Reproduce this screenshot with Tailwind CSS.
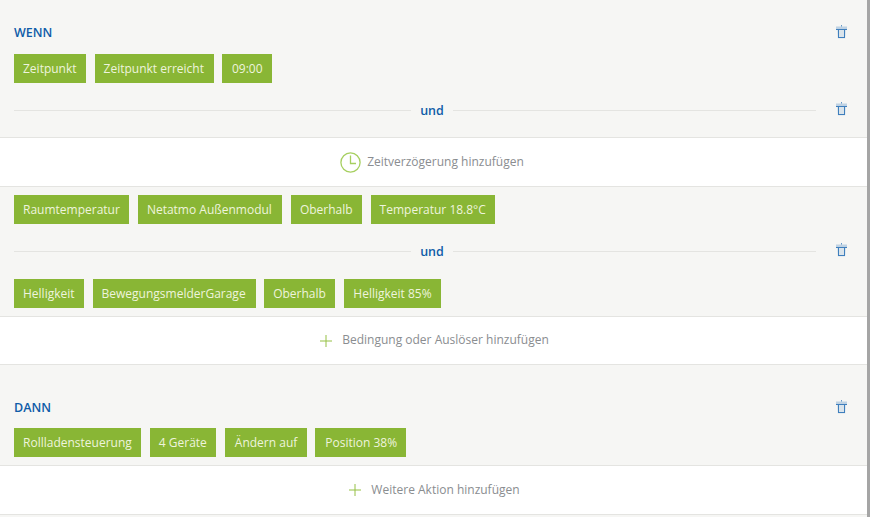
<!DOCTYPE html>
<html lang="de">
<head>
<meta charset="utf-8">
<script src="https://cdn.jsdelivr.net/npm/@tailwindcss/browser@4"></script>
</head>
<body class="bg-[#f6f6f4] overflow-hidden font-['Open_Sans',sans-serif]">
<div class="w-[870px] h-[517px] flex overflow-hidden">
  <main class="w-[867px] shrink-0 flex flex-col">
    <section class="h-[137px] px-[14px] pt-[23px] flex flex-col">
      <div class="h-[18px] flex items-center justify-between pr-[5px]">
        <h2 class="text-[12.5px] pt-[2px] font-semibold text-[#0f5ca8]">WENN</h2>
        <svg class="w-[13px] h-[14px] text-[#3f7fbd]" viewBox="0 0 13 14" fill="none" stroke="currentColor"><path d="M6.5 0v1.5" stroke-opacity=".8"/><path d="M1 1.5h11v3H1z" fill="currentColor" fill-opacity=".3" stroke="none"/><path d="M1 4.5h11"/><path d="M1.8 5l1 8.5h7.4l1-8.5z" fill="currentColor" fill-opacity=".15" stroke="none"/><path d="M3.5 5v8M9.5 5v8M3.5 12.5h6"/></svg>
      </div>
      <div class="flex mt-[13px]">
        <span class="h-[29px] px-[9px] mr-[9px] flex items-center bg-[#89b635] text-[12px] text-[#eef4dd]">Zeitpunkt</span>
        <span class="h-[29px] pl-[9px] pr-[10px] mr-[8px] flex items-center bg-[#89b635] text-[12px] text-[#eef4dd]">Zeitpunkt erreicht</span>
        <span class="h-[29px] pl-[10px] pr-[9px] flex items-center bg-[#89b635] text-[12px] text-[#eef4dd]">09:00</span>
      </div>
      <div class="flex items-center mt-[16px] h-[22px]">
        <div class="flex-1 h-px bg-[#e4e4e1]"></div>
        <span class="w-[42px] pt-[2px] text-center text-[12.5px] font-semibold text-[#0f5ca8]">und</span>
        <div class="w-[363px] h-px bg-[#e4e4e1]"></div>
        <svg class="w-[13px] h-[14px] ml-[19px] mr-[5px] -mt-[2px] text-[#3f7fbd]" viewBox="0 0 13 14" fill="none" stroke="currentColor"><path d="M6.5 0v1.5" stroke-opacity=".8"/><path d="M1 1.5h11v3H1z" fill="currentColor" fill-opacity=".3" stroke="none"/><path d="M1 4.5h11"/><path d="M1.8 5l1 8.5h7.4l1-8.5z" fill="currentColor" fill-opacity=".15" stroke="none"/><path d="M3.5 5v8M9.5 5v8M3.5 12.5h6"/></svg>
      </div>
    </section>
    <div class="h-[50px] bg-white border-y border-[#e4e4e1] flex items-center justify-center gap-[6px] text-[12px] text-[#8a8d90] pr-[3px]">
      <svg class="w-[21px] h-[21px] text-[#a6cf5f]" viewBox="0 0 21 21" fill="none" stroke="currentColor" stroke-width="1.3"><circle cx="10.5" cy="10.5" r="9.6"/><path d="M10.5 3.5v8h5.5"/></svg>
      <span>Zeitverzögerung hinzufügen</span>
    </div>
    <section class="h-[129px] px-[14px] pt-[8px] flex flex-col">
      <div class="flex">
        <span class="h-[29px] px-[9px] mr-[9px] flex items-center bg-[#89b635] text-[12px] text-[#eef4dd]">Raumtemperatur</span>
        <span class="h-[29px] pl-[9px] pr-[10px] mr-[9px] flex items-center bg-[#89b635] text-[12px] text-[#eef4dd]">Netatmo Außenmodul</span>
        <span class="h-[29px] px-[9px] mr-[9px] flex items-center bg-[#89b635] text-[12px] text-[#eef4dd]">Oberhalb</span>
        <span class="h-[29px] px-[9px] flex items-center bg-[#89b635] text-[12px] text-[#eef4dd]">Temperatur 18.8°C</span>
      </div>
      <div class="flex items-center mt-[16px] h-[22px]">
        <div class="flex-1 h-px bg-[#e4e4e1]"></div>
        <span class="w-[42px] pt-[2px] text-center text-[12.5px] font-semibold text-[#0f5ca8]">und</span>
        <div class="w-[363px] h-px bg-[#e4e4e1]"></div>
        <svg class="w-[13px] h-[14px] ml-[19px] mr-[5px] -mt-[2px] text-[#3f7fbd]" viewBox="0 0 13 14" fill="none" stroke="currentColor"><path d="M6.5 0v1.5" stroke-opacity=".8"/><path d="M1 1.5h11v3H1z" fill="currentColor" fill-opacity=".3" stroke="none"/><path d="M1 4.5h11"/><path d="M1.8 5l1 8.5h7.4l1-8.5z" fill="currentColor" fill-opacity=".15" stroke="none"/><path d="M3.5 5v8M9.5 5v8M3.5 12.5h6"/></svg>
      </div>
      <div class="flex mt-[17px]">
        <span class="h-[29px] px-[9px] mr-[9px] flex items-center bg-[#89b635] text-[12px] text-[#eef4dd]">Helligkeit</span>
        <span class="h-[29px] pl-[9px] pr-[10px] mr-[8px] flex items-center bg-[#89b635] text-[12px] text-[#eef4dd]">BewegungsmelderGarage</span>
        <span class="h-[29px] pl-[9.5px] pr-[9px] mr-[9.5px] flex items-center bg-[#89b635] text-[12px] text-[#eef4dd]">Oberhalb</span>
        <span class="h-[29px] px-[9px] flex items-center bg-[#89b635] text-[12px] text-[#eef4dd]">Helligkeit 85%</span>
      </div>
    </section>
    <div class="h-[49px] bg-white border-y border-[#e4e4e1] flex items-center justify-center gap-[10px] text-[12px] text-[#8a8d90] pl-[2px]">
      <svg class="w-[12px] h-[12px] text-[#95c045]" viewBox="0 0 12 12" fill="none" stroke="currentColor"><path d="M6 0v12M0 6h12"/></svg>
      <span class="-mt-[1px]">Bedingung oder Auslöser hinzufügen</span>
    </div>
    <section class="h-[100px] px-[14px] pt-[33px] flex flex-col">
      <div class="h-[18px] flex items-center justify-between pr-[5px]">
        <h2 class="text-[12.5px] pt-[2px] font-semibold text-[#0f5ca8]">DANN</h2>
        <svg class="w-[13px] h-[14px] text-[#3f7fbd]" viewBox="0 0 13 14" fill="none" stroke="currentColor"><path d="M6.5 0v1.5" stroke-opacity=".8"/><path d="M1 1.5h11v3H1z" fill="currentColor" fill-opacity=".3" stroke="none"/><path d="M1 4.5h11"/><path d="M1.8 5l1 8.5h7.4l1-8.5z" fill="currentColor" fill-opacity=".15" stroke="none"/><path d="M3.5 5v8M9.5 5v8M3.5 12.5h6"/></svg>
      </div>
      <div class="flex mt-[12px]">
        <span class="h-[29px] px-[9px] mr-[9px] flex items-center bg-[#89b635] text-[12px] text-[#eef4dd]">Rollladensteuerung</span>
        <span class="h-[29px] px-[9px] mr-[9px] flex items-center bg-[#89b635] text-[12px] text-[#eef4dd]">4 Geräte</span>
        <span class="h-[29px] px-[10px] mr-[8px] flex items-center bg-[#89b635] text-[12px] text-[#eef4dd]">Ändern auf</span>
        <span class="h-[29px] pl-[10px] pr-[9px] flex items-center bg-[#89b635] text-[12px] text-[#eef4dd]">Position 38%</span>
      </div>
    </section>
    <div class="h-[50px] bg-white border-y border-[#e4e4e1] flex items-center justify-center gap-[10px] text-[12px] text-[#8a8d90] pl-[2px]">
      <svg class="w-[12px] h-[12px] text-[#95c045]" viewBox="0 0 12 12" fill="none" stroke="currentColor"><path d="M6 0v12M0 6h12"/></svg>
      <span>Weitere Aktion hinzufügen</span>
    </div>
  </main>
  <div class="w-[3px] bg-[#a5a5a5]"></div>
</div>
</body>
</html>
